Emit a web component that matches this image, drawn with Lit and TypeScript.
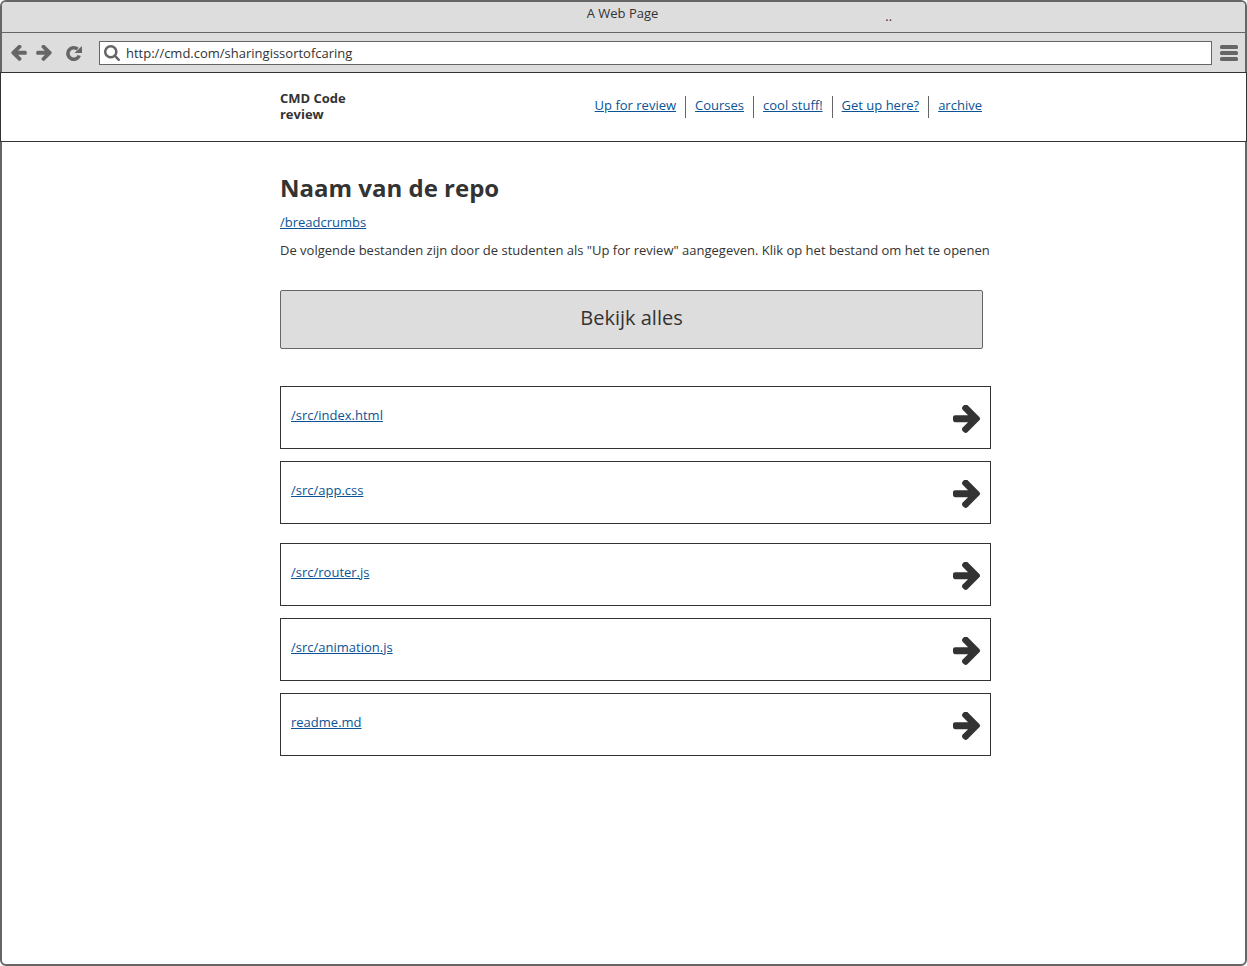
import { LitElement, html, css, svg } from "lit";
import { customElement, property } from "lit/decorators.js";

type IconName = "left" | "right" | "reload" | "search" | "menu";

// Each icon is a tight viewBox and the shape inside it.
const icons: Record<IconName, { box: string; shape: unknown }> = {
  right: {
    box: "128 219 1472 1520",
    shape: svg`<path d="M1600 960q0 54-37 91l-651 651q-39 37-91 37-51 0-90-37l-75-75q-38-38-38-91t38-91l293-293h-704q-52 0-84.500-37.500t-32.500-90.500v-128q0-53 32.500-90.500t84.500-37.500h704l-293-294q-38-36-38-90t38-90l75-75q38-38 90-38 53 0 91 38l651 651q37 35 37 90z"/>`,
  },
  left: {
    box: "128 219 1472 1520",
    shape: svg`<path transform="translate(1728 0) scale(-1 1)" d="M1600 960q0 54-37 91l-651 651q-39 37-91 37-51 0-90-37l-75-75q-38-38-38-91t38-91l293-293h-704q-52 0-84.500-37.500t-32.500-90.500v-128q0-53 32.500-90.500t84.500-37.500h704l-293-294q-38-36-38-90t38-90l75-75q38-38 90-38 53 0 91 38l651 651q37 35 37 90z"/>`,
  },
  reload: {
    box: "0 0 16 16",
    shape: svg`<path d="M11.600 4.200A5.800 5.800 0 1 0 13.200 10.500" fill="none" stroke="currentColor" stroke-width="3.600"/><path d="M16 1v7H8.500z"/>`,
  },
  search: {
    box: "64 128 1664 1664",
    shape: svg`<path d="M1216 832q0-185-131.500-316.500t-316.500-131.500-316.500 131.500-131.500 316.500 131.500 316.500 316.500 131.500 316.500-131.500 131.500-316.500zm512 832q0 52-38 90t-90 38q-54 0-90-38l-343-342q-179 124-399 124-143 0-273.500-55.500t-225-150-150-225-55.500-273.500 55.500-273.500 150-225 225-150 273.500-55.500 273.500 55.500 225 150 150 225 55.500 273.500q0 220-124 399l343 343q37 37 37 90z"/>`,
  },
  menu: {
    box: "0 0 18 16",
    shape: svg`<rect width="18" height="4" rx="1.500"/><rect y="6" width="18" height="4" rx="1.500"/><rect y="12" width="18" height="4" rx="1.500"/>`,
  },
};

@customElement("ui-icon")
export class UiIcon extends LitElement {
  @property() name: IconName = "right";

  static styles = css`
    :host {
      display: block;
      flex: none;
      width: 16px;
      height: 16px;
    }
    .glyph {
      display: block;
      width: 100%;
      height: 100%;
      fill: currentColor;
    }
  `;

  render() {
    const { box, shape } = icons[this.name];
    return html`<svg class="glyph" viewBox=${box} aria-hidden="true">${shape}</svg>`;
  }
}

@customElement("file-row")
export class FileRow extends LitElement {
  @property() path = "";

  static styles = css`
    :host {
      display: flex;
      justify-content: space-between;
      align-items: center;
      box-sizing: border-box;
      min-height: 63px;
      padding: 0 10px;
      border: 1px solid #333;
      color: #333;
    }
    .link {
      color: #0b5394;
      padding-bottom: 6px;
    }
    .arrow {
      width: 27px;
      height: 28px;
      padding-top: 2px;
    }
  `;

  render() {
    return html`
      <a class="link" href="#">${this.path}</a>
      <ui-icon class="arrow" name="right"></ui-icon>
    `;
  }
}

@customElement("app-root")
export class AppRoot extends LitElement {
  private links = ["Up for review", "Courses", "cool stuff!", "Get up here?", "archive"];
  private groups = [
    ["/src/index.html", "/src/app.css"],
    ["/src/router.js", "/src/animation.js", "readme.md"],
  ];

  static styles = css`
    :host {
      display: block;
      background: #fff;
      color: #333;
      font: 13px/16px "Open Sans", sans-serif;
    }
    .window {
      display: flex;
      flex-direction: column;
      box-sizing: border-box;
      min-height: 100vh;
      border: 2px solid #666;
      border-radius: 6px;
    }
    .titlebar {
      display: grid;
      grid-template-columns: 1fr auto 1fr;
      height: 30px;
      padding-top: 3px;
      box-sizing: border-box;
      border-radius: 4px 4px 0 0;
      background: #ddd;
    }
    .title {
      grid-column: 2;
      padding-right: 2px;
    }
    .dots {
      padding: 3px 0 0 225px;
    }
    .toolbar {
      display: flex;
      align-items: center;
      height: 39px;
      padding: 0 7px 0 9px;
      border-top: 1px solid #666;
      background: #ddd;
    }
    .tool {
      padding: 0;
      border: 0;
      background: none;
      color: #666;
    }
    .buttons {
      display: flex;
      gap: 9px;
      padding-right: 17px;
    }
    .reload {
      padding-left: 5px;
    }
    .address {
      display: flex;
      flex: 1;
      align-items: center;
      gap: 6px;
      box-sizing: border-box;
      height: 24px;
      margin-right: 8px;
      padding: 0 4px;
      border: 1px solid #666;
      background: #fff;
      color: #666;
    }
    .url {
      flex: 1;
      min-width: 0;
      padding: 0;
      border: 0;
      outline: 0;
      background: none;
      color: #333;
      font: inherit;
    }
    .menu {
      width: 18px;
    }
    .header,
    .main {
      display: grid;
      grid-template-columns: 280fr minmax(0, 711px) 256fr;
      margin: 0 -2px;
    }
    .header {
      box-sizing: border-box;
      height: 70px;
      border: 1px solid #333;
      background: #fff;
    }
    .bar {
      grid-column: 2;
      display: flex;
      justify-content: space-between;
      align-items: flex-start;
      padding: 17px 9px 0 0;
    }
    .brand {
      width: 80px;
      font-weight: 700;
    }
    .nav {
      display: flex;
      padding-top: 6px;
    }
    .item {
      height: 22px;
      padding: 0 9px;
      border-left: 1px solid #666;
      line-height: 18px;
      white-space: nowrap;
    }
    .item:first-child {
      border-left: 0;
    }
    .item:last-child {
      padding-right: 0;
    }
    .link {
      color: #0b5394;
    }
    .content {
      grid-column: 2;
    }
    .heading {
      margin: 30px 0 10px;
      font-size: 24px;
      line-height: 32px;
    }
    .intro {
      margin: 12px 0 32px;
      white-space: nowrap;
    }
    .all {
      display: block;
      width: calc(100% - 8px);
      height: 59px;
      margin-bottom: 37px;
      padding: 0 0 4px;
      border: 1px solid #666;
      border-radius: 2px;
      background: #ddd;
      color: #333;
      font: 20px/28px "Open Sans", sans-serif;
    }
    .files {
      display: grid;
      gap: 19px;
    }
    .group {
      display: grid;
      gap: 12px;
    }
  `;

  render() {
    return html`
      <div class="window">
        <div class="titlebar">
          <span class="title">A Web Page</span>
          <span class="dots">..</span>
        </div>
        <div class="toolbar">
          <div class="buttons">
            <button class="tool" aria-label="Back"><ui-icon name="left"></ui-icon></button>
            <button class="tool" aria-label="Forward"><ui-icon name="right"></ui-icon></button>
            <button class="tool reload" aria-label="Reload"><ui-icon name="reload"></ui-icon></button>
          </div>
          <label class="address">
            <ui-icon name="search"></ui-icon>
            <input class="url" aria-label="Address" value="http://cmd.com/sharingissortofcaring" />
          </label>
          <button class="tool" aria-label="Menu"><ui-icon class="menu" name="menu"></ui-icon></button>
        </div>
        <header class="header">
          <div class="bar">
            <div class="brand">CMD Code review</div>
            <nav class="nav">
              ${this.links.map((t) => html`<span class="item"><a class="link" href="#">${t}</a></span>`)}
            </nav>
          </div>
        </header>
        <main class="main">
          <div class="content">
            <h1 class="heading">Naam van de repo</h1>
            <a class="link" href="#">/breadcrumbs</a>
            <p class="intro">De volgende bestanden zijn door de studenten als "Up for review" aangegeven. Klik op het bestand om het te openen</p>
            <button class="all">Bekijk alles</button>
            <div class="files">
              ${this.groups.map(
                (g) => html`<div class="group">${g.map((p) => html`<file-row path=${p}></file-row>`)}</div>`
              )}
            </div>
          </div>
        </main>
      </div>
    `;
  }
}
